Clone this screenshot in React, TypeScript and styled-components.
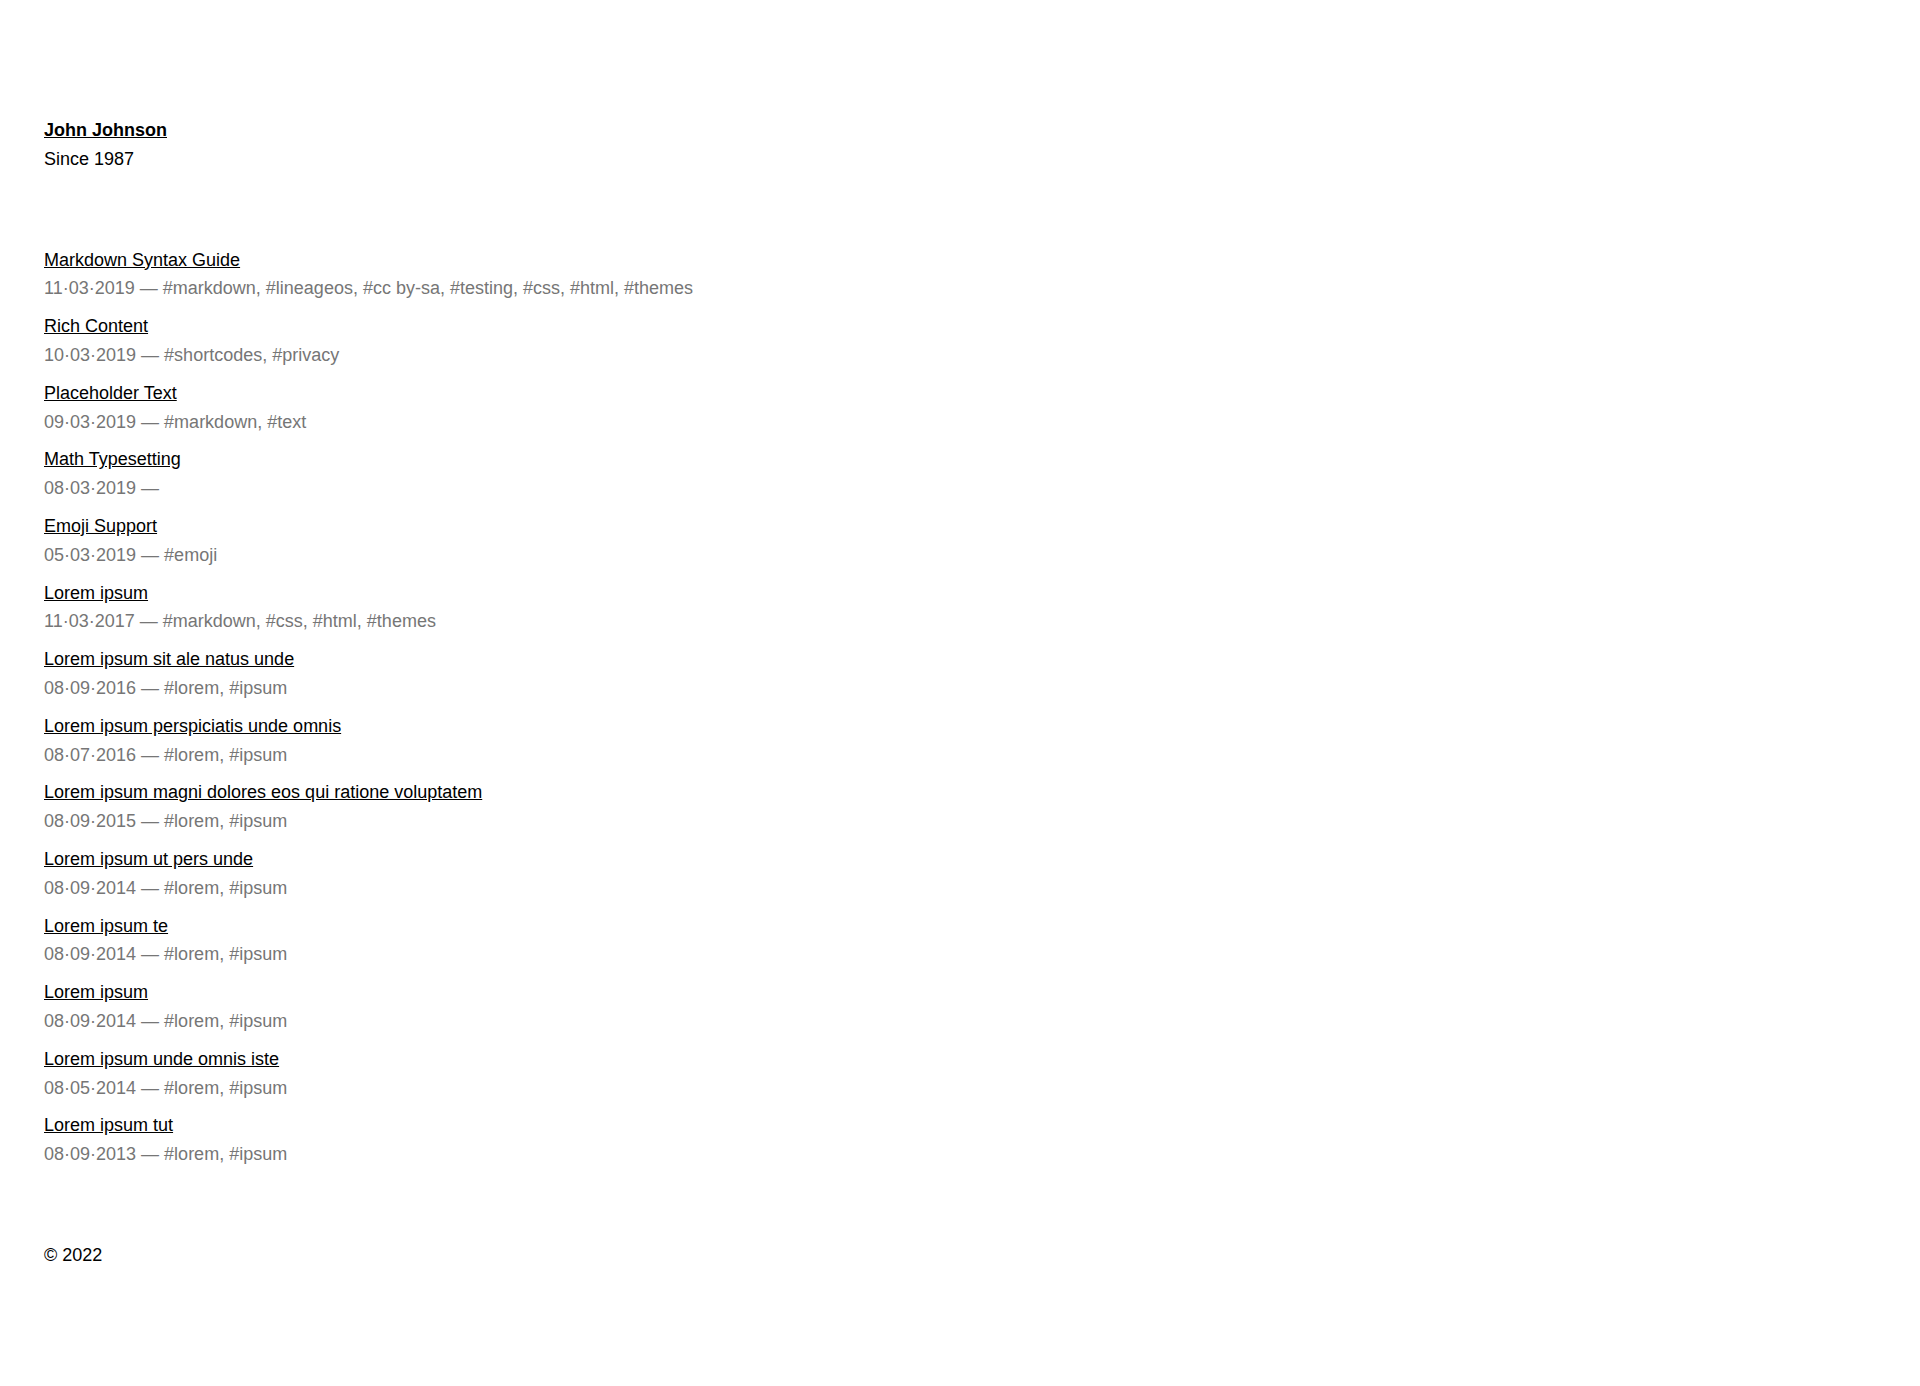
import styled, { createGlobalStyle } from 'styled-components'

type Post = {
    title: string
    date: string
    tags: string[]
}

const posts: Post[] = [
    {
        title: 'Markdown Syntax Guide',
        date: '11·03·2019',
        tags: ['markdown', 'lineageos', 'cc by-sa', 'testing', 'css', 'html', 'themes'],
    },
    { title: 'Rich Content', date: '10·03·2019', tags: ['shortcodes', 'privacy'] },
    { title: 'Placeholder Text', date: '09·03·2019', tags: ['markdown', 'text'] },
    { title: 'Math Typesetting', date: '08·03·2019', tags: [] },
    { title: 'Emoji Support', date: '05·03·2019', tags: ['emoji'] },
    { title: 'Lorem ipsum', date: '11·03·2017', tags: ['markdown', 'css', 'html', 'themes'] },
    { title: 'Lorem ipsum sit ale natus unde', date: '08·09·2016', tags: ['lorem', 'ipsum'] },
    { title: 'Lorem ipsum perspiciatis unde omnis', date: '08·07·2016', tags: ['lorem', 'ipsum'] },
    {
        title: 'Lorem ipsum magni dolores eos qui ratione voluptatem',
        date: '08·09·2015',
        tags: ['lorem', 'ipsum'],
    },
    { title: 'Lorem ipsum ut pers unde', date: '08·09·2014', tags: ['lorem', 'ipsum'] },
    { title: 'Lorem ipsum te', date: '08·09·2014', tags: ['lorem', 'ipsum'] },
    { title: 'Lorem ipsum', date: '08·09·2014', tags: ['lorem', 'ipsum'] },
    { title: 'Lorem ipsum unde omnis iste', date: '08·05·2014', tags: ['lorem', 'ipsum'] },
    { title: 'Lorem ipsum tut', date: '08·09·2013', tags: ['lorem', 'ipsum'] },
]

const App = () => {
    return (
        <>
            <GlobalStyle />
            <Page>
                <Header>
                    <Name href="#">John Johnson</Name>
                    <Since>Since 1987</Since>
                </Header>
                <PostList>
                    {posts.map((post, i) => (
                        <PostItem key={i}>
                            <PostLink href="#">{post.title}</PostLink>
                            <Meta>
                                {post.date} —{' '}
                                {post.tags.map((tag) => '#' + tag).join(', ')}
                            </Meta>
                        </PostItem>
                    ))}
                </PostList>
                <Footer>© 2022</Footer>
            </Page>
        </>
    )
}

export default App

const GlobalStyle = createGlobalStyle`
    html, body {
        margin: 0;
        padding: 0;
        background: #fff;
    }
    body {
        font-family: "Liberation Sans", Arial, sans-serif;
        font-size: 18px;
        line-height: 1.6;
        color: #000;
    }
`
const Page = styled.div`
    padding: 116px 44px 0;
    display: flex;
    flex-direction: column;
    gap: 72px;
`
const Header = styled.header`
    display: flex;
    flex-direction: column;
    align-items: flex-start;
`
const Name = styled.a`
    font-weight: bold;
    color: #000;
    text-decoration: underline;
`
const Since = styled.span``
const PostList = styled.ul`
    list-style: none;
    margin: 0;
    padding: 0;
    display: flex;
    flex-direction: column;
    gap: 9px;
`
const PostItem = styled.li`
    display: flex;
    flex-direction: column;
    align-items: flex-start;
`
const PostLink = styled.a`
    color: #000;
    text-decoration: underline;
`
const Meta = styled.span`
    color: #767676;
`
const Footer = styled.footer``
